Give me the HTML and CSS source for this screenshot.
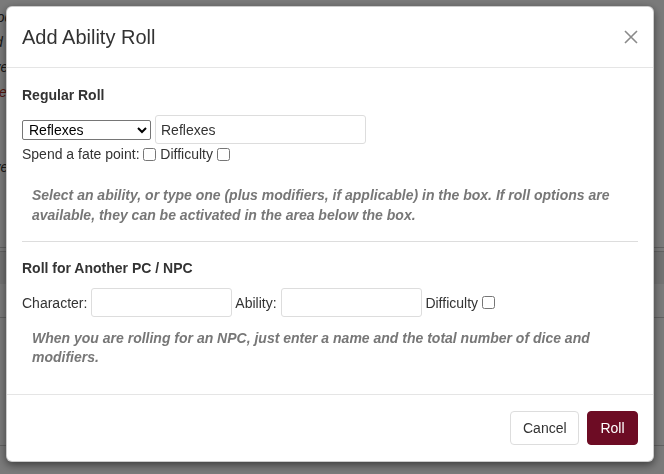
FILE: index.html
```html
<!DOCTYPE html>
<html>
<head>
<meta charset="utf-8">
<link rel="stylesheet" href="styles.css">
</head>
<body>
<div class="page">
  <div class="page-text">
    <p>Good</p>
    <p>Add</p>
    <p>Level</p>
    <p class="red">Free</p>
    <p>+1</p>
    <p>4</p>
    <p>Level</p>
  </div>
  <div class="page-rule r1"></div>
  <div class="page-band"></div>
  <div class="page-rule r2"></div>
  <div class="page-rule r3"></div>
</div>
<div class="backdrop"></div>
<div class="modal">
  <div class="modal-header">
    <h4 class="modal-title">Add Ability Roll</h4>
    <button class="close" aria-label="Close">
      <svg width="14" height="14" viewBox="0 0 14 14"><path d="M1 1 L13 13 M13 1 L1 13" stroke="#8a8a8a" stroke-width="1.6" fill="none"/></svg>
    </button>
  </div>
  <div class="modal-body">
    <div class="section-title">Regular Roll</div>
    <div class="row-inputs">
      <select class="ability-select">
        <option>Reflexes</option>
      </select>
      <input class="text-input wide" type="text" value="Reflexes">
    </div>
    <div class="row-checks">Spend a fate point: <input type="checkbox"> Difficulty <input type="checkbox"></div>
    <p class="help first">Select an ability, or type one (plus modifiers, if applicable) in the box. If roll options are available, they can be activated in the area below the box.</p>
    <hr class="divider">
    <div class="section-title">Roll for Another PC / NPC</div>
    <div class="row-inputs">Character: <input class="text-input narrow" type="text"> Ability: <input class="text-input narrow" type="text"> Difficulty <input type="checkbox"></div>
    <p class="help second">When you are rolling for an NPC, just enter a name and the total number of dice and modifiers.</p>
  </div>
  <div class="modal-footer">
    <button class="btn btn-cancel">Cancel</button>
    <button class="btn btn-roll">Roll</button>
  </div>
</div>
</body>
</html>
```
FILE: styles.css
```css
html, body {
  margin: 0;
  padding: 0;
  width: 664px;
  height: 474px;
  overflow: hidden;
  font-family: "Liberation Sans", Arial, sans-serif;
  font-size: 14px;
  color: #333;
  background: #fff;
}

.page {
  position: relative;
  width: 664px;
  height: 474px;
}

.page-text {
  padding-top: 8px;
  margin-left: -22px;
}
.page-text p {
  margin: 0 0 6px;
  height: 19px;
  line-height: 19px;
  font-size: 14px;
  font-style: italic;
  color: #333;
}
.page-text p.red { color: #b03020; }

.page-rule {
  position: absolute;
  left: 0;
  right: 0;
  height: 1px;
  background: #ccc;
}
.r1 { top: 247px; }
.r2 { top: 317px; }
.r3 { top: 445px; }
.page-band {
  position: absolute;
  left: 0;
  right: 0;
  top: 251px;
  height: 32px;
  background: #eee;
  border-top: 1px solid #ccc;
}

.backdrop {
  position: fixed;
  inset: 0;
  background: rgba(0, 0, 0, 0.52);
}

.modal {
  position: fixed;
  left: 6px;
  top: 6px;
  width: 646px;
  background: #fff;
  border: 1px solid rgba(0, 0, 0, 0.2);
  border-radius: 6px;
  box-shadow: 0 3px 9px rgba(0, 0, 0, 0.5);
  box-sizing: content-box;
}

.modal-header {
  height: 60px;
  padding: 0 15px;
  border-bottom: 1px solid #e5e5e5;
  display: flex;
  align-items: center;
  justify-content: space-between;
}
.modal-title {
  margin: 0;
  font-size: 20px;
  font-weight: normal;
  line-height: 30px;
  color: #333;
}
.close {
  background: none;
  border: 0;
  padding: 0;
  width: 14px;
  height: 14px;
  display: flex;
}

.modal-body {
  padding: 17px 15px 27px;
}

.section-title {
  font-weight: bold;
  line-height: 20px;
  height: 20px;
}

.row-inputs {
  margin-top: 10px;
  height: 29px;
  display: flex;
  align-items: center;
  white-space: pre;
}

.ability-select {
  width: 129px;
  height: 20px;
  font-family: "Liberation Sans", Arial, sans-serif;
  font-size: 14px;
  color: #000;
  border: 1px solid #767676;
  border-radius: 2px;
  background: #fff;
  margin: 0 4px 0 0;
  padding: 0 0 0 2px;
}

.text-input {
  box-sizing: border-box;
  height: 29px;
  border: 1px solid #ddd;
  border-radius: 3px;
  padding: 0 5px;
  font-family: "Liberation Sans", Arial, sans-serif;
  font-size: 14px;
  color: #333;
  margin: 0;
}
.text-input.wide { width: 211px; }
.text-input.narrow { width: 141px; }

.row-inputs input[type="checkbox"] {
  margin: 0;
  width: 13px;
  height: 13px;
}

.row-checks input[type="checkbox"] {
  margin: 0;
  width: 13px;
  height: 13px;
  vertical-align: middle;
  position: relative;
  top: -1px;
}

.row-checks {
  height: 20px;
  line-height: 20px;
}

.help {
  margin: 0;
  padding-left: 10px;
  font-weight: bold;
  font-style: italic;
  color: #777;
  line-height: 20px;
}
.help.first { margin-top: 21px; }
.help.second { margin-top: 12px; line-height: 19px; }

.divider {
  margin: 16px 0 16px;
  border: 0;
  border-top: 1px solid #ddd;
  height: 0;
}

.modal-footer {
  border-top: 1px solid #e5e5e5;
  padding: 16px 15px;
  display: flex;
  justify-content: flex-end;
  gap: 8px;
}

.btn {
  box-sizing: border-box;
  height: 34px;
  padding: 0 12px;
  font-family: "Liberation Sans", Arial, sans-serif;
  font-size: 14px;
  border-radius: 4px;
  border: 1px solid #ddd;
  cursor: pointer;
}
.btn-cancel {
  width: 69px;
  background: #fff;
  color: #333;
}
.btn-roll {
  width: 51px;
  background: #6d0c24;
  border-color: #6d0c24;
  color: #fff;
}
```
